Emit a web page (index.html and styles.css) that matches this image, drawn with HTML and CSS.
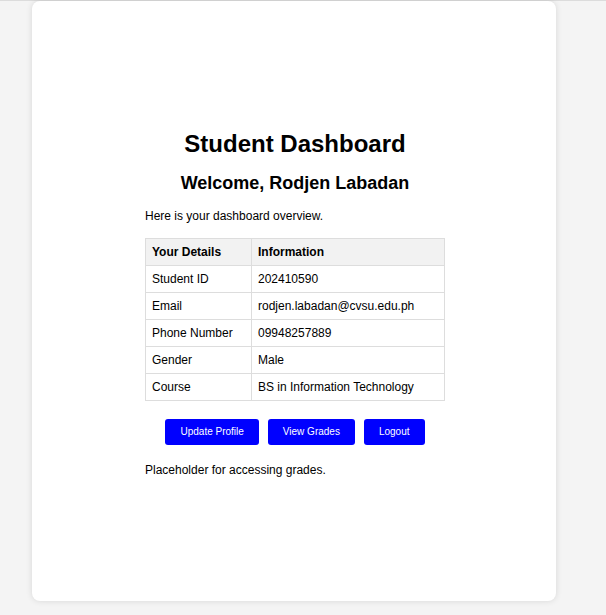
FILE: index.html
```html
<!DOCTYPE html>
<html>
<head>
<meta charset="utf-8">
<title>Student Dashboard</title>
<link rel="stylesheet" href="styles.css">
</head>
<body>
<div class="page">
  <div class="card">
    <div class="content">
      <h1 class="title">Student Dashboard</h1>
      <h2 class="welcome">Welcome, Rodjen Labadan</h2>
      <p class="intro">Here is your dashboard overview.</p>
      <table class="details">
        <thead>
          <tr><th class="col-a">Your Details</th><th>Information</th></tr>
        </thead>
        <tbody>
          <tr><td>Student ID</td><td>202410590</td></tr>
          <tr><td>Email</td><td>rodjen.labadan@cvsu.edu.ph</td></tr>
          <tr><td>Phone Number</td><td>09948257889</td></tr>
          <tr><td>Gender</td><td>Male</td></tr>
          <tr><td>Course</td><td>BS in Information Technology</td></tr>
        </tbody>
      </table>
      <div class="actions">
        <button class="btn">Update Profile</button>
        <button class="btn">View Grades</button>
        <button class="btn">Logout</button>
      </div>
      <p class="note">Placeholder for accessing grades.</p>
    </div>
  </div>
</div>
</body>
</html>
```
FILE: styles.css
```css
html, body {
  margin: 0;
  padding: 0;
}
body {
  background: #f4f4f4;
  font-family: "Liberation Sans", Arial, sans-serif;
  color: #000;
}
.page {
  border-top: 1px solid #dcdcdc;
  height: 614px;
  box-sizing: border-box;
}
.card {
  margin-left: 32px;
  width: 524px;
  height: 600px;
  box-sizing: border-box;
  padding: 4px 0 0 2px;
  background: #fff;
  border-radius: 8px;
  box-shadow: 0 0 6px rgba(0, 0, 0, 0.12);
  display: flex;
  flex-direction: column;
  justify-content: center;
  align-items: center;
}
.content {
  width: 300px;
  display: flex;
  flex-direction: column;
}
.title {
  font-size: 24px;
  font-weight: bold;
  text-align: center;
  margin: 0 0 15px;
  line-height: 28px;
}
.welcome {
  font-size: 18px;
  font-weight: bold;
  text-align: center;
  margin: 0 0 15px;
  line-height: 21px;
}
.intro {
  font-size: 12px;
  margin: 0 0 15px;
  line-height: 14px;
}
.details {
  width: 300px;
  border-collapse: collapse;
  font-size: 12px;
}
.details th, .details td {
  border: 1px solid #ddd;
  padding: 6px;
  text-align: left;
  line-height: 14px;
}
.details th {
  background: #f2f2f2;
  font-weight: bold;
}
.col-a {
  width: 93px;
}
.actions {
  display: flex;
  justify-content: center;
  gap: 9px;
  margin-top: 18px;
}
.btn {
  background: #0000ff;
  color: #fff;
  border: none;
  border-radius: 3px;
  font-family: "Liberation Sans", Arial, sans-serif;
  font-size: 10px;
  height: 26px;
  padding: 0 15px;
}
.note {
  font-size: 12px;
  line-height: 14px;
  margin: 18px 0 0;
}
```
